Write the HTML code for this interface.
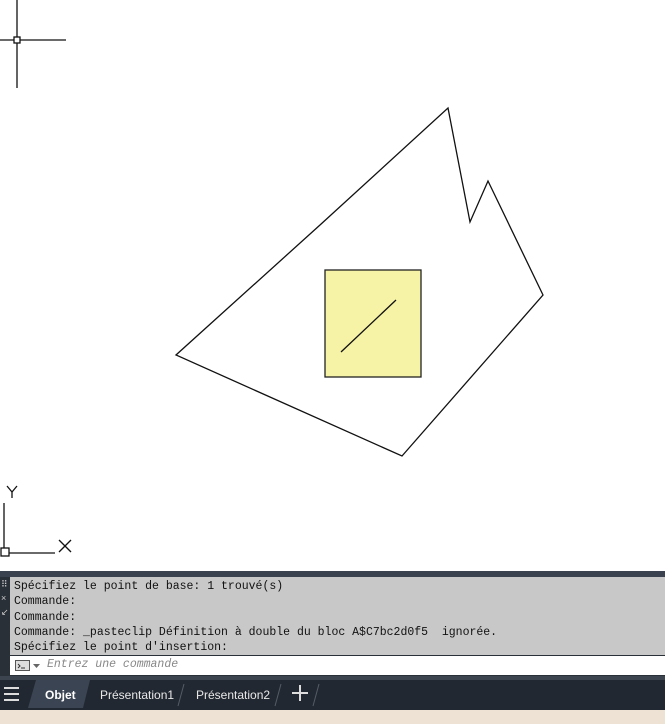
<!DOCTYPE html>
<html><head><meta charset="utf-8"><style>
html,body{margin:0;padding:0;width:665px;height:724px;overflow:hidden;background:#fff;font-family:"Liberation Sans",sans-serif}
.abs{position:absolute}
.cmd{left:0;top:571px;width:665px;height:6px;background:#3a4250}
.hist{left:0;top:577px;width:665px;height:79px;background:#c8c8c8}
.strip{left:0;top:577px;width:10px;height:100px;background:#2a3038}
.hist pre{margin:0;position:absolute;left:14px;top:2px;font-family:"Liberation Mono",monospace;font-size:11.5px;line-height:15.3px;color:#111}
.inp{left:10px;top:655px;width:655px;height:21px;background:#fff;border-top:1px solid #2a3038;border-bottom:1px solid #2a3038;box-sizing:border-box}
.inp span{position:absolute;left:37px;top:2px;font-family:"Liberation Mono",monospace;font-style:italic;font-size:11.5px;color:#888}
.tabs{left:0;top:676px;width:665px;height:34px;background:#222831;border-top:4px solid #3c4450;box-sizing:border-box}
.tab{position:absolute;top:8px;font-size:12px;color:#e8e8e8}
.bot{left:0;top:710px;width:665px;height:14px;background:#eee2d4}
</style></head><body>
<svg class="abs" style="left:0;top:0" width="665" height="571">
<g stroke="#111" stroke-width="1.3" fill="none">
<line x1="17" y1="0" x2="17" y2="88"/><line x1="0" y1="40" x2="66" y2="40"/>
<rect x="14" y="37" width="6" height="6" fill="#fff"/>
<polyline points="320,225 448,108 470,222 488,181 543,295 402,456 176,355 320,225"/>
<rect x="325" y="270" width="96" height="107" fill="#f7f3a6" stroke="#222"/>
<line x1="341" y1="352" x2="396" y2="300"/>
<line x1="4" y1="503" x2="4" y2="552"/><line x1="4" y1="553" x2="55" y2="553"/>
<rect x="1" y="548" width="8" height="8" fill="#fff"/>
<polyline points="7,486 12,492 17,486"/><line x1="12" y1="492" x2="12" y2="498"/>
<line x1="59" y1="540" x2="71" y2="552"/><line x1="71" y1="540" x2="59" y2="552"/>
</g></svg>
<div class="abs cmd"></div>
<div class="abs hist"><pre>Spécifiez le point de base: 1 trouvé(s)
Commande:
Commande:
Commande: _pasteclip Définition à double du bloc A$C7bc2d0f5  ignorée.
Spécifiez le point d'insertion:</pre></div>
<div class="abs strip"><div style="color:#ccc;font-size:9px;line-height:14px;padding-left:1px">⠿<br>×<br>↙</div></div>
<div class="abs inp"><svg class="abs" style="left:5px;top:4px" width="30" height="12"><rect x="0.5" y="0.5" width="14" height="10" fill="#ddd" stroke="#555"/><path d="M3 4l2 2-2 2M6 8h4" stroke="#333" fill="none"/><path d="M18 4h7l-3.5 4z" fill="#666"/></svg><span>Entrez une commande</span></div>
<div class="abs tabs">
<svg class="abs" style="left:0;top:0" width="665" height="30">
<g stroke="#ddd" stroke-width="2"><line x1="4" y1="8" x2="19" y2="8"/><line x1="4" y1="14" x2="19" y2="14"/><line x1="4" y1="20" x2="19" y2="20"/></g>
<polygon points="36,0 90,0 83,28 28,28" fill="#3b4452"/>
<g stroke="#555c66"><line x1="184" y1="4" x2="178" y2="26"/><line x1="281" y1="4" x2="275" y2="26"/><line x1="319" y1="4" x2="313" y2="26"/></g>
<g stroke="#ddd" stroke-width="2"><line x1="300" y1="5" x2="300" y2="21"/><line x1="292" y1="13" x2="308" y2="13"/></g>
</svg>
<div class="tab" style="left:45px;font-weight:bold;color:#fff">Objet</div>
<div class="tab" style="left:100px">Présentation1</div>
<div class="tab" style="left:196px">Présentation2</div>
</div>
<div class="abs bot"></div>
</body></html>
